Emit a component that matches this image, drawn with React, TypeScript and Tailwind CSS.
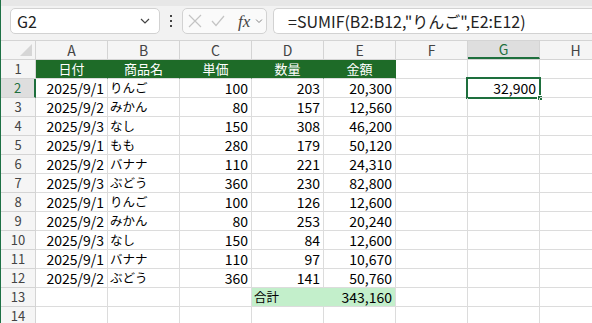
import React from "react";

const rows: [string, string, string, string, string][] = [
  ["2025/9/1", "りんご", "100", "203", "20,300"],
  ["2025/9/2", "みかん", "80", "157", "12,560"],
  ["2025/9/3", "なし", "150", "308", "46,200"],
  ["2025/9/1", "もも", "280", "179", "50,120"],
  ["2025/9/2", "バナナ", "110", "221", "24,310"],
  ["2025/9/3", "ぶどう", "360", "230", "82,800"],
  ["2025/9/1", "りんご", "100", "126", "12,600"],
  ["2025/9/2", "みかん", "80", "253", "20,240"],
  ["2025/9/3", "なし", "150", "84", "12,600"],
  ["2025/9/1", "バナナ", "110", "97", "10,670"],
  ["2025/9/2", "ぶどう", "360", "141", "50,760"],
];

const cols = ["A", "B", "C", "D", "E", "F", "G", "H"];

function Chevron({ className }: { className?: string }) {
  return (
    <svg width="10" height="6" viewBox="0 0 10 6" className={className}>
      <path d="M1 1 L5 5 L9 1" fill="none" stroke="currentColor" strokeWidth="1.2" />
    </svg>
  );
}

function RowHeader({ n, selected }: { n: number; selected?: boolean }) {
  return (
    <div
      className={
        "w-[35px] shrink-0 h-[19px] border-b border-[#d4d4d4] flex items-start justify-center pt-[1px] text-[13px] leading-[16px] " +
        (selected
          ? "bg-[#dedede] border-r-2 border-r-[#1e6f3d] text-[#1e6f3d]"
          : "bg-[#f5f5f5] border-r border-r-[#d4d4d4] text-[#444]")
      }
    >
      {n}
    </div>
  );
}

function Cell({
  children,
  align = "left",
  className = "",
  jp = false,
}: {
  children?: React.ReactNode;
  align?: "left" | "right" | "center";
  className?: string;
  jp?: boolean;
}) {
  const a =
    align === "right" ? "justify-end pr-[3px]" : align === "center" ? "justify-center" : "justify-start pl-[2px]";
  return (
    <div
      className={
        "relative w-[72px] shrink-0 h-[19px] border-r border-b border-[#dcdcdc] flex items-end leading-[18px] whitespace-nowrap " +
        a +
        " " +
        (jp ? "text-[12.5px] " : "text-[14px] ") +
        className
      }
    >
      {children}
    </div>
  );
}

export default function App() {
  return (
    <div className="w-[592px] h-[323px] overflow-hidden bg-white border-l border-[#1e7145] font-['Noto_Sans_CJK_JP','Noto_Sans',sans-serif] text-black">
      {/* formula bar */}
      <div className="h-[40px] bg-[#f2f2f2] flex flex-col">
        <div className="h-[6px] bg-[#e7e7e7]" />
        <div className="flex items-start pt-[2px] pl-[9px]">
          <div className="w-[150px] h-[26px] bg-white border border-[#d2d2d2] rounded-[5px] flex items-center justify-between pl-[6px] pr-[9px]">
            <span className="text-[16px] leading-none text-[#222]">G2</span>
            <Chevron className="text-[#444]" />
          </div>
          <div className="w-[22px] h-[26px] flex flex-col items-center justify-center gap-[3px]">
            <div className="w-[2px] h-[2px] bg-[#444]" />
            <div className="w-[2px] h-[2px] bg-[#444]" />
            <div className="w-[2px] h-[2px] bg-[#444]" />
          </div>
          <div className="w-[85px] h-[26px] bg-[#fafafa] border border-[#d2d2d2] rounded-[5px] flex items-center pl-[5px]">
            <svg width="14" height="14" viewBox="0 0 14 14" className="text-[#c4c4c4]">
              <path d="M1 1 L13 13 M13 1 L1 13" stroke="currentColor" strokeWidth="1.2" fill="none" />
            </svg>
            <svg width="14" height="12" viewBox="0 0 14 12" className="ml-[9px] text-[#c4c4c4]">
              <path d="M1 6 L5 10.5 L13 1" stroke="currentColor" strokeWidth="1.2" fill="none" />
            </svg>
            <span className="ml-[13px] font-['Liberation_Serif',serif] italic text-[17px] leading-none text-[#444]">
              fx
            </span>
            <Chevron className="ml-[4px] text-[#777] scale-75" />
          </div>
          <div className="ml-[6px] flex-1 h-[26px] bg-white border border-[#d2d2d2] border-r-0 rounded-l-[5px] flex items-center pl-[14px]">
            <span className="text-[16px] leading-none text-[#222] whitespace-nowrap">
              =SUMIF(B2:B12,"りんご",E2:E12)
            </span>
          </div>
        </div>
      </div>

      {/* column headers */}
      <div className="flex h-[20px] border-t border-b border-[#d4d4d4] bg-[#f5f5f5]">
        <div className="relative w-[35px] shrink-0 border-r border-[#d4d4d4]">
          <svg width="12" height="12" viewBox="0 0 12 12" className="absolute right-[3px] bottom-[3px]">
            <path d="M12 0 L12 12 L0 12 Z" fill="#d6d6d6" />
          </svg>
        </div>
        {cols.map((c) => (
          <div
            key={c}
            className={
              "w-[72px] shrink-0 flex items-center justify-center text-[14px] " +
              (c === "G"
                ? "bg-[#dedede] border-b-2 border-[#1e6f3d] text-[#1e6f3d] border-r border-r-[#d4d4d4]"
                : "border-r border-[#d4d4d4] text-[#444]")
            }
          >
            {c}
          </div>
        ))}
      </div>

      {/* row 1 */}
      <div className="flex">
        <RowHeader n={1} />
        {["日付", "商品名", "単価", "数量", "金額"].map((h) => (
          <Cell key={h} align="center" jp className="bg-[#1e6b28] border-r-[#1e6b28] text-white text-[13px]">
            {h}
          </Cell>
        ))}
        <Cell />
        <Cell />
        <Cell />
      </div>

      {rows.map((r, i) => {
        const n = i + 2;
        return (
          <div key={n} className="flex">
            <RowHeader n={n} selected={n === 2} />
            <Cell align="right">{r[0]}</Cell>
            <Cell jp>{r[1]}</Cell>
            <Cell align="right">{r[2]}</Cell>
            <Cell align="right">{r[3]}</Cell>
            <Cell align="right">{r[4]}</Cell>
            <Cell />
            {n === 2 ? (
              <Cell align="right">
                32,900
                <div className="absolute left-[-2px] top-[-2px] w-[75px] h-[22px] border-2 border-[#1e6f3d]" />
                <div className="absolute right-[-4px] bottom-[-4px] w-[6px] h-[6px] bg-[#1e6f3d] border border-white" />
              </Cell>
            ) : (
              <Cell />
            )}
            <Cell />
          </div>
        );
      })}

      {/* row 13 */}
      <div className="flex">
        <RowHeader n={13} />
        <Cell />
        <Cell />
        <Cell />
        <Cell jp className="bg-[#c3efcb] border-r-[#c3efcb]">
          合計
        </Cell>
        <Cell align="right" className="bg-[#c3efcb]">
          343,160
        </Cell>
        <Cell />
        <Cell />
        <Cell />
      </div>

      {/* row 14 */}
      <div className="flex">
        <RowHeader n={14} />
        {cols.map((c) => (
          <Cell key={c} />
        ))}
      </div>
    </div>
  );
}
